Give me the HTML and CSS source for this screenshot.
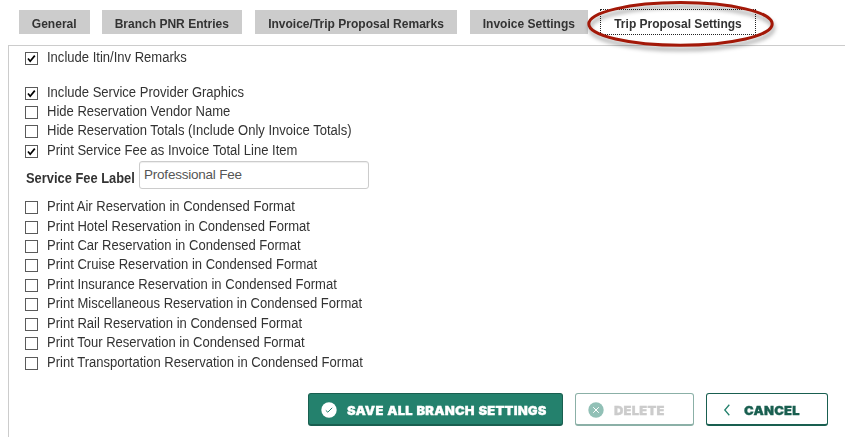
FILE: index.html
```
<!DOCTYPE html>
<html lang="en">
<head>
<meta charset="utf-8">
<title>Branch Settings</title>
<link rel="stylesheet" href="styles.css">
</head>
<body>
<nav class="tabs">
  <a class="tab general"><span>General</span></a>
  <a class="tab entries"><span>Branch PNR Entries</span></a>
  <a class="tab remarks"><span>Invoice/Trip Proposal Remarks</span></a>
  <a class="tab invoice"><span>Invoice Settings</span></a>
  <a class="tab proposal active"><span>Trip Proposal Settings</span>
    <svg class="ring" width="200" height="60" viewBox="0 0 200 60"><ellipse cx="100.5" cy="25.9" rx="91.7" ry="21.3" fill="none" stroke="#a31808" stroke-width="3"/></svg>
  </a>
</nav>
<main class="panel">
  <div class="group first">
    <label class="row"><input type="checkbox" checked><span>Include Itin/Inv Remarks</span></label>
  </div>
  <div class="group service">
    <label class="row"><input type="checkbox" checked><span>Include Service Provider Graphics</span></label>
    <label class="row"><input type="checkbox"><span>Hide Reservation Vendor Name</span></label>
    <label class="row"><input type="checkbox"><span>Hide Reservation Totals (Include Only Invoice Totals)</span></label>
    <label class="row"><input type="checkbox" checked><span>Print Service Fee as Invoice Total Line Item</span></label>
  </div>
  <div class="fee">
    <label class="fee-label" for="fee"><span>Service Fee Label</span></label>
    <input class="fee-input" id="fee" type="text" value="Professional Fee">
  </div>
  <div class="group condensed">
    <label class="row"><input type="checkbox"><span>Print Air Reservation in Condensed Format</span></label>
    <label class="row"><input type="checkbox"><span>Print Hotel Reservation in Condensed Format</span></label>
    <label class="row"><input type="checkbox"><span>Print Car Reservation in Condensed Format</span></label>
    <label class="row"><input type="checkbox"><span>Print Cruise Reservation in Condensed Format</span></label>
    <label class="row"><input type="checkbox"><span>Print Insurance Reservation in Condensed Format</span></label>
    <label class="row"><input type="checkbox"><span>Print Miscellaneous Reservation in Condensed Format</span></label>
    <label class="row"><input type="checkbox"><span>Print Rail Reservation in Condensed Format</span></label>
    <label class="row"><input type="checkbox"><span>Print Tour Reservation in Condensed Format</span></label>
    <label class="row"><input type="checkbox"><span>Print Transportation Reservation in Condensed Format</span></label>
  </div>
  <div class="actions">
    <button class="btn save"><svg width="16" height="16" viewBox="0 0 16 16"><circle cx="8" cy="8" r="7.7" fill="#fff"/><path d="M4.8 8.4 6.8 10.2 11.2 5.8" fill="none" stroke="#24816d" stroke-width="1"/></svg><span>SAVE ALL BRANCH SETTINGS</span></button>
    <button class="btn delete"><svg width="16" height="16" viewBox="0 0 16 16"><circle cx="8" cy="8" r="7.7" fill="#91c0b6"/><path d="M5.2 5.2 10.8 10.8M10.8 5.2 5.2 10.8" fill="none" stroke="#fff" stroke-width="1"/></svg><span>DELETE</span></button>
    <button class="btn cancel"><svg width="8" height="12" viewBox="0 0 8 12"><path d="M6.3 .8 1.8 6 6.3 11.2" fill="none" stroke="#24816d" stroke-width="1.3"/></svg><span>CANCEL</span></button>
  </div>
</main>
</body>
</html>
```
FILE: styles.css
```
* { box-sizing: border-box; }
body {
  margin: 0;
  height: 437px;
  overflow: hidden;
  background: #fff;
  color: #333;
  font-family: "Liberation Sans", Arial, sans-serif;
  font-size: 14px;
}
.tabs {
  display: flex;
  height: 45px;
  padding: 10px 0 11px 19px;
}
.tab {
  position: relative;
  display: flex;
  align-items: center;
  justify-content: center;
  height: 24px;
  padding-top: 3px;
  background: #ccc;
  font-size: 13px;
  font-weight: bold;
  white-space: nowrap;
}
.tab span { transform: scaleX(.925); }
.general { width: 71px; margin-right: 12px; }
.entries { width: 140px; margin-right: 13px; }
.remarks { width: 202px; margin-right: 13px; }
.invoice { width: 118px; margin-right: 12px; }
.proposal { width: 156px; }
.active {
  height: 26px;
  margin-top: -1px;
  background: #fff;
  border: 1px dotted #222;
}
.ring {
  position: absolute;
  left: -21px;
  top: -12px;
  filter: drop-shadow(1px 4px 2px rgba(0, 0, 0, .38));
}
.panel {
  height: 392px;
  margin-left: 8px;
  padding-left: 16px;
  border-top: 1px solid #ccc;
  border-left: 1px solid #ccc;
}
.first { padding-top: 2px; }
.service { padding-top: 15.08px; }
.row {
  display: flex;
  align-items: flex-start;
  height: 19.45px;
  line-height: 19px;
  white-space: nowrap;
}
.row span {
  transform: scaleX(.931);
  transform-origin: left;
}
.row input {
  appearance: none;
  width: 13px;
  height: 13px;
  margin: 4px 9px 0 0;
  border: 1px solid #5a5a5a;
  background: #fff;
}
.row input:checked {
  background: #fff url("data:image/svg+xml,%3Csvg xmlns='http://www.w3.org/2000/svg' viewBox='0 0 11 11'%3E%3Cpath d='M2 5.5 4.2 8.2 8.8 2.6' fill='none' stroke='%23000' stroke-width='1.7'/%3E%3C/svg%3E");
}
.fee {
  display: flex;
  height: 36.87px;
  padding-top: 1px;
}
.fee-label {
  width: 113px;
  padding: 8px 0 0 1px;
  font-weight: bold;
  line-height: 18px;
  white-space: nowrap;
}
.fee-label span {
  display: inline-block;
  transform: scaleX(.92);
  transform-origin: left;
}
.fee-input {
  width: 230px;
  height: 28px;
  margin-left: 1px;
  padding: 0 4px 1px;
  border: 1px solid #ccc;
  border-radius: 3px;
  box-shadow: inset 0 1px 1px rgba(0, 0, 0, .07);
  color: #555;
  font: 13.5px "Liberation Sans", Arial, sans-serif;
  letter-spacing: -.22px;
}
.actions {
  display: flex;
  gap: 12px;
  padding: 21.05px 0 0 283px;
}
.btn {
  display: flex;
  align-items: center;
  height: 33px;
  padding: 2px 0 0 12px;
  border: 1px solid #195f50;
  border-bottom-width: 2px;
  border-radius: 3px;
  background: #fff;
  color: #195f50;
  font: 900 12px Inter, sans-serif;
  white-space: nowrap;
}
.btn svg { flex: none; }
.btn span {
  transform: scaleX(1.08);
  transform-origin: left;
  letter-spacing: .2px;
  word-spacing: .8px;
  -webkit-text-stroke: .3px currentColor;
}
.save { width: 255px; background: #24816d; color: #fff; }
.save span { margin-left: 10px; }
.delete { width: 119px; border-color: #8bb0a7; color: #ccc; }
.delete span { margin-left: 10px; }
.cancel { width: 122px; padding-left: 16px; }
.cancel span { margin-left: 13px; }
```
